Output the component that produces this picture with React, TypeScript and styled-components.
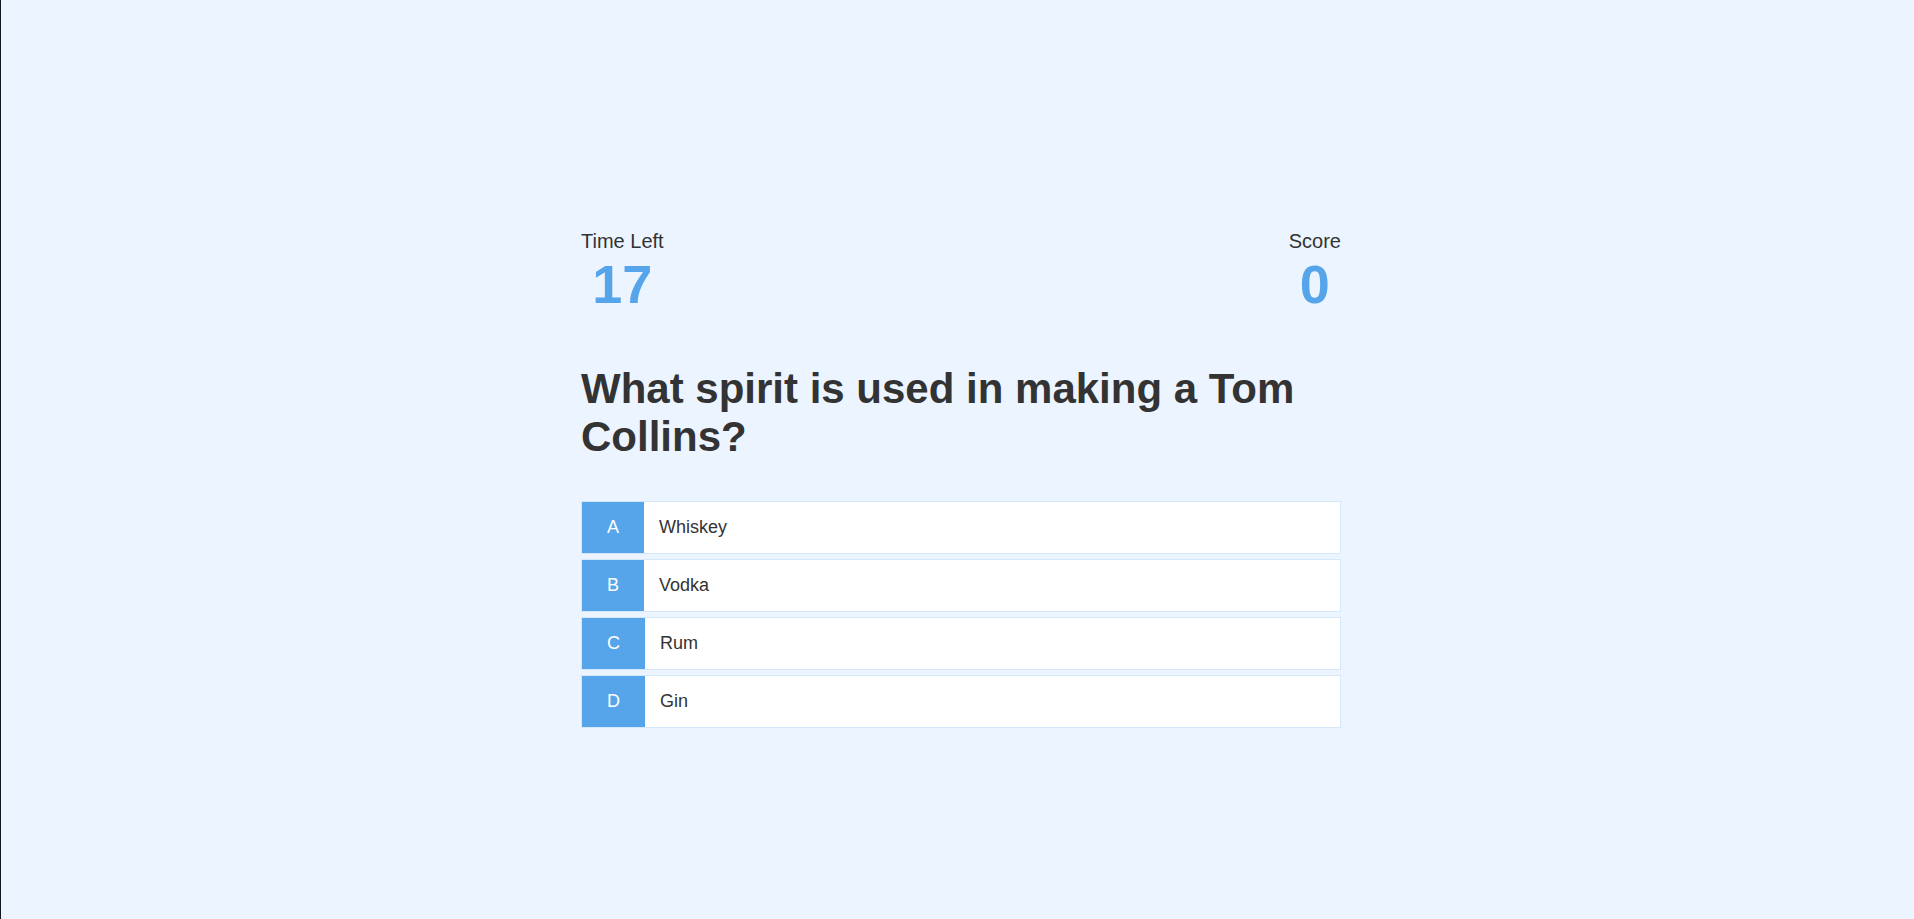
import styled, { createGlobalStyle } from 'styled-components';

const GlobalStyle = createGlobalStyle`
	html, body {
		margin: 0;
		padding: 0;
		background-color: #ecf5ff;
	}

	* {
		box-sizing: border-box;
		font-family: 'Liberation Sans', Arial, Helvetica, sans-serif;
		color: #333;
	}
`;

const Page = styled.div`
	min-height: 919px;
	display: flex;
	justify-content: center;
	padding-left: 7px;
	border-left: 1px solid #14161f;
`;

const Container = styled.div`
	width: 760px;
	padding-top: 230px;
	display: flex;
	flex-direction: column;
`;

const Hud = styled.div`
	display: flex;
	justify-content: space-between;
`;

const HudItem = styled.div`
	text-align: center;
`;

const HudPrefix = styled.p`
	margin: 0;
	font-size: 20px;
`;

const HudMain = styled.h1`
	margin: 0 0 50px;
	font-size: 54px;
	font-weight: 700;
	color: #56a5eb;
`;

const Question = styled.h2`
	margin: 0 0 40px;
	font-size: 42px;
	font-weight: 700;
`;

const Choice = styled.div`
	display: flex;
	width: 100%;
	margin-bottom: 5px;
	font-size: 18px;
	background-color: #fff;
	border: 1px solid rgba(86, 165, 235, 0.25);
`;

const ChoicePrefix = styled.p`
	margin: 0;
	padding: 15px 25px;
	background-color: #56a5eb;
	color: #fff;
`;

const ChoiceText = styled.p`
	margin: 0;
	padding: 15px;
	width: 100%;
`;

const choices = [
	{ prefix: 'A', text: 'Whiskey' },
	{ prefix: 'B', text: 'Vodka' },
	{ prefix: 'C', text: 'Rum' },
	{ prefix: 'D', text: 'Gin' },
];

const App = () => {
	return (
		<>
			<GlobalStyle />
			<Page>
				<Container>
					<Hud>
						<HudItem>
							<HudPrefix>Time Left</HudPrefix>
							<HudMain>17</HudMain>
						</HudItem>
						<HudItem>
							<HudPrefix>Score</HudPrefix>
							<HudMain>0</HudMain>
						</HudItem>
					</Hud>
					<Question>What spirit is used in making a Tom Collins?</Question>
					{choices.map(choice => (
						<Choice key={choice.prefix}>
							<ChoicePrefix>{choice.prefix}</ChoicePrefix>
							<ChoiceText>{choice.text}</ChoiceText>
						</Choice>
					))}
				</Container>
			</Page>
		</>
	);
};

export default App;
